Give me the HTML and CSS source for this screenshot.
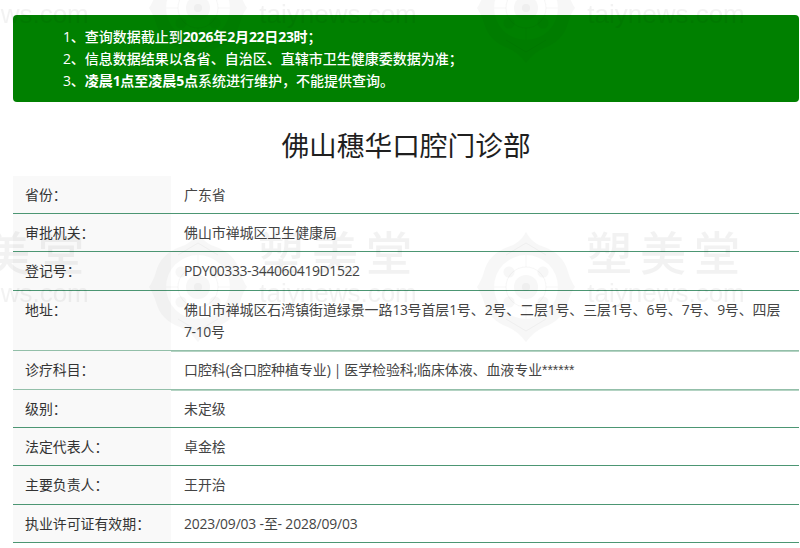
FILE: index.html
```html
<!DOCTYPE html>
<html lang="zh-CN">
<head>
<meta charset="utf-8">
<title>佛山穗华口腔门诊部</title>
<link rel="stylesheet" href="styles.css">
</head>
<body>
<main class="page">
  <section class="notice">
    <p><span class="lat">1</span>、查询数据截止到<b><span class="lat">2026</span>年<span class="lat">2</span>月<span class="lat">22</span>日<span class="lat">23</span>时</b>；</p>
    <p><span class="lat">2</span>、信息数据结果以各省、自治区、直辖市卫生健康委数据为准；</p>
    <p><span class="lat">3</span>、<b>凌晨<span class="lat">1</span>点至凌晨<span class="lat">5</span>点</b>系统进行维护，不能提供查询。</p>
  </section>
  <h1 class="title">佛山穗华口腔门诊部</h1>
  <dl class="info">
    <div class="row"><dt>省份：</dt><dd>广东省</dd></div>
    <div class="row"><dt>审批机关：</dt><dd>佛山市禅城区卫生健康局</dd></div>
    <div class="row"><dt>登记号：</dt><dd class="lat">PDY00333-344060419D1522</dd></div>
    <div class="row row-soft"><dt>地址：</dt><dd>佛山市禅城区石湾镇街道绿景一路<span class="lat">13</span>号首层<span class="lat">1</span>号、<span class="lat">2</span>号、二层<span class="lat">1</span>号、三层<span class="lat">1</span>号、<span class="lat">6</span>号、<span class="lat">7</span>号、<span class="lat">9</span>号、四层<span class="lat">7-10</span>号</dd></div>
    <div class="row row-soft"><dt>诊疗科目：</dt><dd>口腔科<span class="lat">(</span>含口腔种植专业<span class="lat">) | </span>医学检验科<span class="lat">;</span>临床体液、血液专业<span class="stars">******</span></dd></div>
    <div class="row"><dt>级别：</dt><dd>未定级</dd></div>
    <div class="row"><dt>法定代表人：</dt><dd>卓金桧</dd></div>
    <div class="row"><dt>主要负责人：</dt><dd>王开治</dd></div>
    <div class="row"><dt>执业许可证有效期：</dt><dd class="date">2023/09/03 -至- 2028/09/03</dd></div>
  </dl>
</main>
<svg class="watermark" width="800" height="348" aria-hidden="true">
  <defs>
    <pattern id="wm" patternUnits="userSpaceOnUse" x="147" y="225" width="328" height="279">
      <g class="wm-logo" transform="translate(51 62)">
        <path fill-rule="evenodd" d="M0 -55 C4 -47 11 -42 18 -40 C30 -36 39 -27 42 -15 C44 -8 47 -3 49 0 C46 3 44 8 42 15 C39 27 30 36 18 40 C11 43 5 48 0 55 C-5 48 -11 43 -18 40 C-30 36 -39 27 -42 15 C-44 8 -47 3 -49 0 C-47 -3 -44 -8 -42 -15 C-39 -27 -30 -36 -18 -40 C-11 -42 -4 -47 0 -55 Z M0 -32 A32 32 0 1 0 0 32 A32 32 0 1 0 0 -32 Z"/>
        <circle cx="-17" cy="-15" r="5.5"/>
        <circle cx="17" cy="-15" r="5.5"/>
        <circle cx="-17" cy="15" r="5.5"/>
        <circle cx="17" cy="15" r="5.5"/>
        <circle r="12"/>
        <circle r="4"/>
        <circle class="wm-line" r="20"/>
        <path class="wm-line" d="M0 -32 L0 -20 M0 20 L0 32 M-32 0 L-20 0 M20 0 L32 0 M-20 -32 L0 -44 L20 -32 M-20 32 L0 44 L20 32"/>
      </g>
      <text class="wm-name" x="192" y="45" text-anchor="middle">塑美堂</text>
      <text class="wm-site" x="191" y="77" text-anchor="middle">taiynews.com</text>
    </pattern>
  </defs>
  <rect width="800" height="348" fill="url(#wm)"/>
</svg>
</body>
</html>
```

FILE: styles.css
```css
* {
  box-sizing: border-box;
}

html,
body {
  margin: 0;
  height: 548px;
  overflow: hidden;
  background: #fff;
}

body {
  position: relative;
  font-family: "Open Sans", "Noto Sans CJK SC", sans-serif;
  font-size: 13.9px;
  color: #333;
}

.page {
  padding: 15px 1px 0 13px;
}

.lat {
  letter-spacing: -0.35px;
}

.date {
  letter-spacing: -0.16px;
}

.stars {
  font-family: "Liberation Sans", sans-serif;
}

.notice {
  height: 87px;
  padding: 11px 0 0 50px;
  background: #008000;
  border-radius: 4px;
  color: #fff;
  font-size: 14px;
  font-weight: 500;
  line-height: 22px;
}

.notice p {
  margin: 0;
}

.notice b {
  font-weight: 700;
}

.title {
  margin: 0;
  height: 73.6px;
  font-size: 27.7px;
  font-weight: 400;
  line-height: 86px;
  text-align: center;
  color: #1f1f1f;
}

.info {
  margin: 0;
}

.row {
  display: grid;
  grid-template-columns: 158px 1fr;
  border-bottom: 1px solid #4c9673;
  line-height: 22px;
}

.row-soft {
  border-bottom-color: #93bfa9;
  box-shadow: 0 1px 0 #b4d3c3;
}

.row dt,
.row dd {
  margin: 0;
  padding: 8px 12px 7.4px;
}

.row dt {
  background: #f9f9f9;
  color: #333;
}

.row dd {
  padding-left: 13px;
  padding-right: 16px;
  color: #444;
}

.watermark {
  position: absolute;
  top: 0;
  left: 0;
  pointer-events: none;
}

.wm-logo {
  fill: rgba(0, 0, 0, 0.03);
}

.wm-line {
  fill: none;
  stroke: rgba(0, 0, 0, 0.03);
  stroke-width: 1;
}

.wm-name {
  font-family: "Noto Sans CJK SC", sans-serif;
  font-size: 46px;
  font-weight: 500;
  letter-spacing: 8px;
  fill: rgba(0, 0, 0, 0.05);
}

.wm-site {
  font-family: "Liberation Sans", sans-serif;
  font-size: 26px;
  fill: rgba(0, 0, 0, 0.05);
}
```
